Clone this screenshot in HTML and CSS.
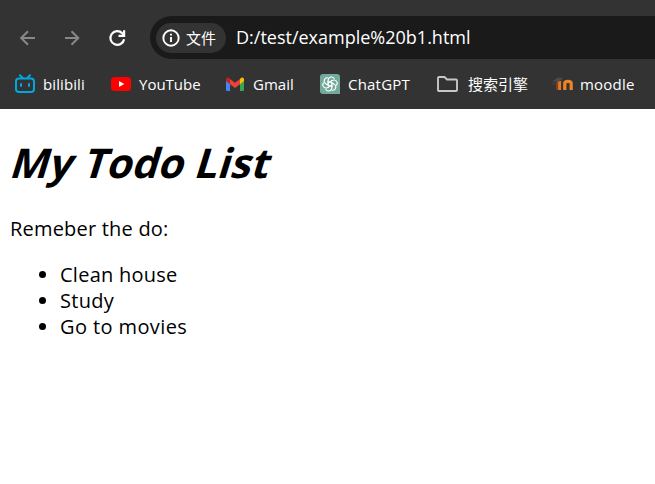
FILE: index.html
```html
<!DOCTYPE html>
<html lang="en">
<head>
<meta charset="utf-8">
<title>My Todo List</title>
<link rel="stylesheet" href="styles.css">
</head>
<body>
<header class="browser">
  <div class="toolbar">
    <svg class="nav" viewBox="0 0 20 20"><path d="M18 10H4M11 3.2L4.2 10l6.8 6.8"/></svg>
    <svg class="nav" viewBox="0 0 20 20"><path d="M3 10H16M9.5 3.2l6.8 6.8-6.8 6.8"/></svg>
    <svg class="nav reload" viewBox="0 0 20 20"><path d="M17.1 11.2A6.9 6.9 0 1 1 15.3 5.2L17 7M17.1 2.3v5.5h-5.6"/></svg>
    <div class="address">
      <span class="chip">
        <svg class="info" viewBox="0 0 18 18"><circle cx="9" cy="9" r="7.7"/><path d="M9 8v5M9 4.8v1.8"/></svg>
        <span class="chip-text">文件</span>
      </span>
      <span class="url">D:/test/example%20b1.html</span>
    </div>
  </div>
  <nav class="bookmarks">
    <a class="bookmark bili"><svg width="20" height="20" viewBox="0 0 20 20" fill="none" stroke="#00a8e1" stroke-width="2" stroke-linecap="round"><rect x="1" y="4.5" width="18" height="13.5" rx="3"/><path d="M5 1.3l2.5 2.5M15 1.3l-2.5 2.5M6 10v2M14 10v2"/></svg><span>bilibili</span></a>
    <a class="bookmark youtube"><svg width="20" height="20" viewBox="0 0 20 20"><rect y="3" width="20" height="14" rx="3.5" fill="#f00"/><path d="M8 7l5.3 3L8 13z" fill="#fff"/></svg><span>YouTube</span></a>
    <a class="bookmark gmail"><svg width="20" height="20" viewBox="0 0 20 20"><path d="M1 5l4 3v9H2.3Q1 17 1 15.7z" fill="#4285f4"/><path d="M15 8l4-3v10.7q0 1.3-1.3 1.3H15z" fill="#34a853"/><path d="M15 5l1-1c1.6-1 3 0 3 1.6V7l-4 3.2z" fill="#fbbc04"/><path d="M1 7V5.6C1 4 2.5 3 4 4l1 1v5.2z" fill="#c5221f"/><path d="M5 5l5 3.8L15 5v5.2L10 14l-5-3.8z" fill="#ea4335"/></svg><span>Gmail</span></a>
    <a class="bookmark chatgpt"><svg width="20" height="20" viewBox="0 0 20 20"><path d="M3 0h14q3 0 3 3v17H3q-3 0-3-3V3q0-3 3-3z" fill="#74aa9c"/><g fill="none" stroke="#fff" stroke-width="1.05"><g id="petal"><path d="M8.1 11.1V6.4c0-4 5.3-4.6 6.3-1.2M8.1 8.9l4-2.3"/></g><use href="#petal" transform="rotate(60 10 10)"/><use href="#petal" transform="rotate(120 10 10)"/><use href="#petal" transform="rotate(180 10 10)"/><use href="#petal" transform="rotate(240 10 10)"/><use href="#petal" transform="rotate(300 10 10)"/></g></svg><span>ChatGPT</span></a>
    <a class="bookmark search"><svg width="21" height="20" viewBox="0 0 21 20" fill="none" stroke="#c7c7c7" stroke-width="1.9" stroke-linejoin="round"><path d="M2 3h5.5L10 5.5h9q1 0 1 1V16q0 1-1 1H2q-1 0-1-1V4q0-1 1-1z"/></svg><span>搜索引擎</span></a>
    <a class="bookmark moodle"><svg width="20" height="20" viewBox="0 0 20 20" fill="none"><path d="M4 15.8V9.3q0-2.4 2.7-2.4" stroke="#8a4d28" stroke-width="1.4"/><path d="M6.6 16V7" stroke="#e5761f" stroke-width="3"/><path d="M11.8 16V9.3q0-2 3.2-2t3.2 2V16" stroke="#f08424" stroke-width="3.2"/><path d="M0 7l5-3.5 5 .5-4 3.8z" fill="#514b49"/><path d="M.8 7v4" stroke="#584039" stroke-width="1"/></svg><span>moodle</span></a>
  </nav>
</header>
<main class="page">
  <h1><em>My Todo List</em></h1>
  <p>Remeber the do:</p>
  <ul>
    <li class="house">Clean house</li>
    <li class="study">Study</li>
    <li class="movies">Go to movies</li>
  </ul>
</main>
</body>
</html>
```
FILE: styles.css
```css
* { box-sizing: border-box; }
body {
  margin: 0;
  overflow: hidden;
  background: #fff;
  color: #000;
  font-family: "Open Sans", "Noto Sans CJK SC", sans-serif;
}
.browser {
  height: 109px;
  padding-top: 16px;
  background: #333;
  color: #fff;
}
.toolbar {
  display: flex;
  align-items: center;
  height: 43px;
  padding-left: 17px;
}
.nav {
  flex: none;
  width: 20px;
  height: 20px;
  margin-right: 25px;
  fill: none;
  stroke: #888;
  stroke-width: 2;
}
.nav.reload { margin-right: 23px; stroke: #fff; stroke-width: 2.2; }
.address {
  display: flex;
  flex: 1;
  align-items: center;
  height: 43px;
  padding-left: 6px;
  border-radius: 22px 0 0 22px;
  background: #1a1a1a;
}
.chip {
  display: flex;
  align-items: center;
  width: 70px;
  height: 30px;
  padding-left: 6px;
  border-radius: 15px;
  background: #333;
}
.info {
  width: 18px;
  height: 18px;
  margin-right: 6px;
  fill: none;
  stroke: #fff;
  stroke-width: 1.9;
}
.chip-text { font-size: 15px; line-height: 30px; }
.url { margin-left: 10px; padding-bottom: 1px; font-size: 18px; line-height: 30px; white-space: nowrap; }
.bookmarks {
  display: flex;
  align-items: center;
  height: 50px;
  padding-left: 15px;
}
.bookmark {
  display: flex;
  flex: none;
  align-items: center;
  gap: 8px;
  font-size: 15px;
  line-height: 20px;
  white-space: nowrap;
}
.bookmark svg { flex: none; }
.bili { width: 96px; letter-spacing: 0.1px; }
.youtube { width: 114px; }
.gmail { width: 95px; }
.chatgpt { width: 117px; letter-spacing: 0.2px; }
.search { width: 116px; gap: 10px; }
.moodle { gap: 7px; letter-spacing: 0.2px; }
.page { display: flow-root; padding: 0 10px; font-size: 20px; }
h1 { margin: 27px 0 27px 3px; font-size: 41px; line-height: 53px; letter-spacing: 0.1px; white-space: nowrap; }
h1 em { display: inline-block; font-style: normal; transform: skewX(-17deg); }
p { margin: 0 0 20px; line-height: 26px; letter-spacing: 0.2px; }
ul { margin: 0; padding-left: 50px; line-height: 26px; }
.house { letter-spacing: 0.25px; }
.study { letter-spacing: 0.3px; }
.movies { letter-spacing: 0.4px; }
```
